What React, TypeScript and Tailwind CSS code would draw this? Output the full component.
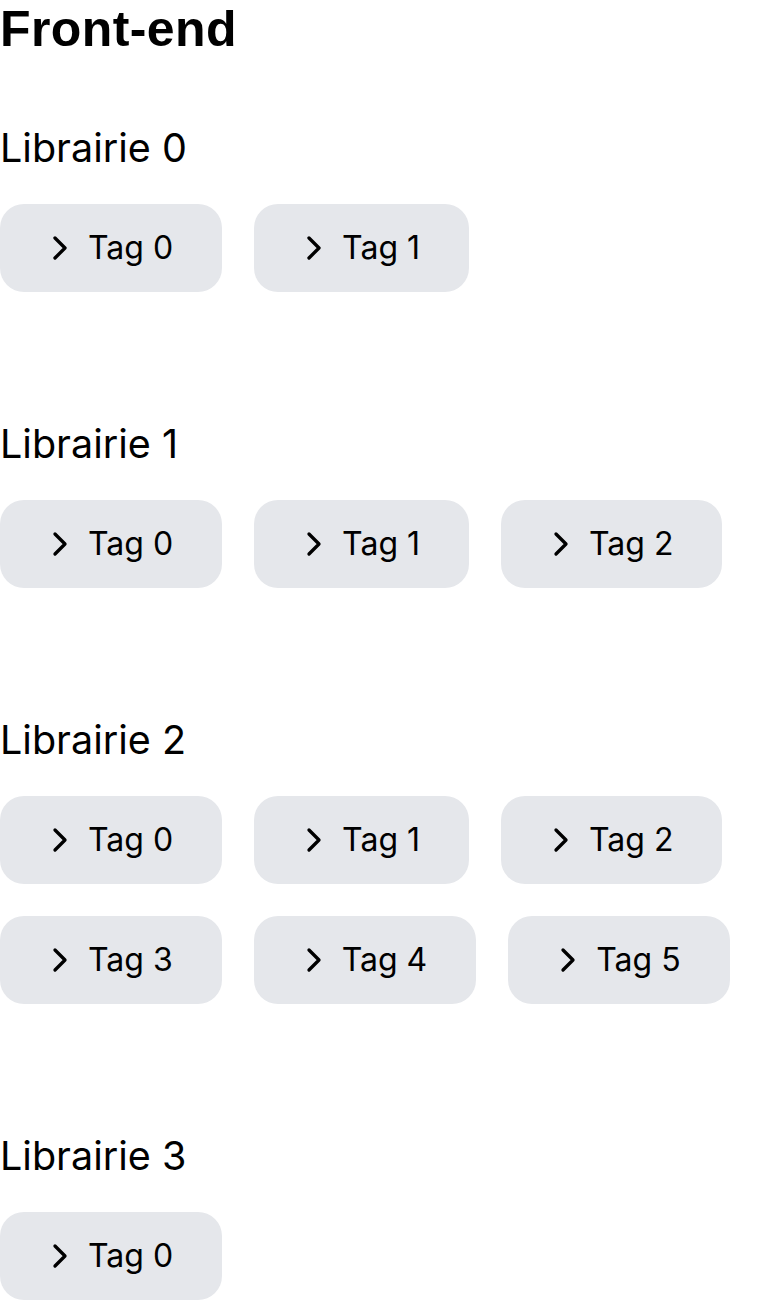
import React from "react";
import { ChevronRight } from "lucide-react";

const sections = [
  { name: "Librairie 0", tags: 2 },
  { name: "Librairie 1", tags: 3 },
  { name: "Librairie 2", tags: 6 },
  { name: "Librairie 3", tags: 1 },
];

export default function App() {
  return (
    <div className="min-h-screen bg-white text-black">
      <h1 className="font-['Liberation_Sans',Arial,sans-serif] text-[50px] font-bold leading-[58px] tracking-[0.4px]">
        Front-end
      </h1>
      <div className="mt-[66px] flex flex-col gap-[128px] font-['Inter',sans-serif]">
        {sections.map((s) => (
          <section key={s.name}>
            <h2 className="mb-8 text-[39.5px] leading-[48px] font-normal">{s.name}</h2>
            <div className="flex flex-wrap gap-8">
              {Array.from({ length: s.tags }).map((_, i) => (
                <button
                  key={i}
                  className="flex h-[88px] items-center gap-2 rounded-[24px] bg-gray-200 pl-10 pr-[49px] text-[32px] leading-[48px] text-black"
                >
                  <ChevronRight size={40} strokeWidth={2} />
                  <span>Tag {i}</span>
                </button>
              ))}
            </div>
          </section>
        ))}
      </div>
    </div>
  );
}
